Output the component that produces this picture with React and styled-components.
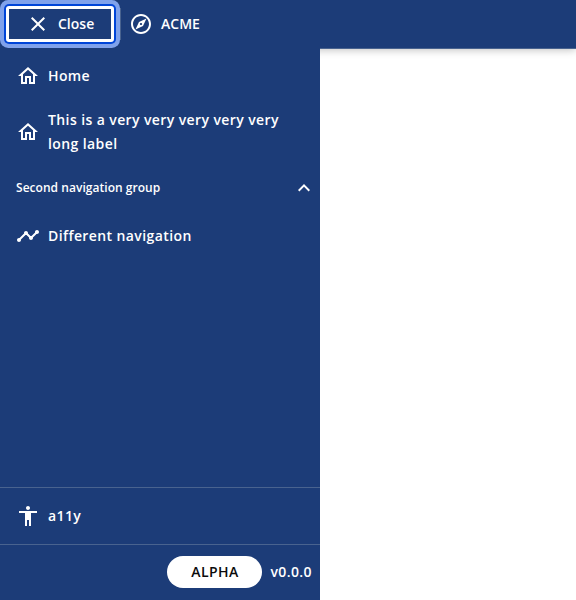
import React from "react";
import styled, { createGlobalStyle } from "styled-components";
import {
  MdClose,
  MdOutlineExplore,
  MdOutlineHome,
  MdTimeline,
  MdAccessibility,
  MdExpandLess,
} from "react-icons/md";

const GlobalStyle = createGlobalStyle`
  * { box-sizing: border-box; }
  body { margin: 0; background: #fff; font-family: "Open Sans", sans-serif; }
`;

const Shell = styled.div`
  display: flex;
  flex-direction: column;
  height: 100vh;
  overflow: hidden;
`;

const Header = styled.header`
  display: flex;
  align-items: center;
  flex: none;
  height: 49px;
  padding: 0 0 0 6px;
  color: #fff;
  background: #1c3c78;
  border-bottom: 1px solid #49638f;
  box-shadow: 0 1px 8px rgba(0, 0, 0, 0.25);
`;

const CloseButton = styled.button`
  display: flex;
  align-items: center;
  gap: 8px;
  width: 108px;
  height: 36px;
  padding: 0 0 0 17px;
  border: 3px solid #fff;
  border-radius: 3px;
  color: #fff;
  background: #1c3c78;
  font: 600 14px/24px "Open Sans", sans-serif;
  outline: none;
  box-shadow: 0 0 0 2px #0045d8, 0 0 0 6px #80a2eb;
`;

const Brand = styled.div`
  display: flex;
  align-items: center;
  gap: 8px;
  height: 32px;
  margin-left: 6px;
  padding-left: 8px;
  border-left: 1px solid #49638f;
  font: 600 14px/24px "Open Sans", sans-serif;
`;

const Sidebar = styled.aside`
  position: relative;
  display: flex;
  flex-direction: column;
  flex: 1;
  width: 320px;
  margin-top: -1px;
  padding-top: 1px;
  color: #fff;
  background: #1c3c78;
`;

const NavList = styled.nav`
  display: flex;
  flex-direction: column;
  flex: 1;
`;

const NavItem = styled.a`
  display: flex;
  align-items: center;
  gap: 8px;
  min-height: ${(p) => p.$height || 56}px;
  padding: 0 24px 0 16px;
  font-size: 14px;
  font-weight: 600;
  line-height: 24px;
  letter-spacing: 0.4px;
  svg { flex: none; }
`;

const GroupHeading = styled.div`
  display: flex;
  align-items: center;
  justify-content: space-between;
  height: 48px;
  padding: 0 4px 0 16px;
  margin-top: 3px;
  font-size: 12px;
  font-weight: 600;
  line-height: 24px;
  letter-spacing: 0.04px;
`;

const Utility = styled.div`
  flex: none;
  border-top: 1px solid #49638f;
`;

const Footer = styled.footer`
  display: flex;
  align-items: center;
  justify-content: flex-end;
  gap: 8px;
  height: 56px;
  padding: 0 8px 2px 0;
  border-top: 1px solid #49638f;
  font-size: 14px;
  font-weight: 600;
  letter-spacing: 0.4px;
`;

const Badge = styled.span`
  width: 95px;
  border-radius: 16px;
  color: #0b0b0b;
  background: #fff;
  line-height: 32px;
  text-align: center;
`;

export default function App() {
  return (
    <Shell>
      <GlobalStyle />
      <Header>
        <CloseButton>
          <MdClose size={24} />
          Close
        </CloseButton>
        <Brand>
          <MdOutlineExplore size={24} />
          ACME
        </Brand>
      </Header>
      <Sidebar>
        <NavList>
          <NavItem $height={54}>
            <MdOutlineHome size={24} />
            Home
          </NavItem>
          <NavItem $height={58}>
            <MdOutlineHome size={24} />
            This is a very very very very very long label
          </NavItem>
          <GroupHeading>
            Second navigation group
            <MdExpandLess size={24} />
          </GroupHeading>
          <NavItem $height={48}>
            <MdTimeline size={24} />
            Different navigation
          </NavItem>
        </NavList>
        <Utility>
          <NavItem $height={56}>
            <MdAccessibility size={24} />
            a11y
          </NavItem>
        </Utility>
        <Footer>
          <Badge>ALPHA</Badge>
          v0.0.0
        </Footer>
      </Sidebar>
    </Shell>
  );
}
